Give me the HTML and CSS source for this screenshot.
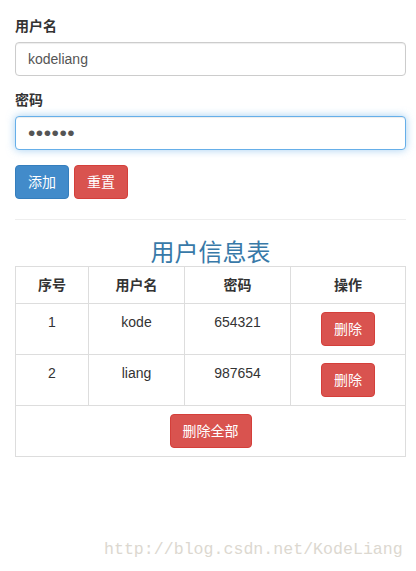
FILE: index.html
```html
<!doctype html>
<html lang="zh-CN">
<head>
  <meta charset="utf-8">
  <title>用户信息表</title>
  <link rel="stylesheet" href="styles.css">
</head>
<body>

<div class="page">
  <form class="user-form">
    <div class="form-group">
      <label for="username">用户名</label>
      <input type="text" id="username" class="form-control" value="kodeliang">
    </div>
    <div class="form-group">
      <label for="password">密码</label>
      <input type="password" id="password" class="form-control pwd is-focus" value="654321">
    </div>
    <div class="actions">
      <button type="button" class="btn btn-primary">添加</button>
      <button type="button" class="btn btn-danger">重置</button>
    </div>
  </form>

  <hr class="divider">

  <h2 class="table-title">用户信息表</h2>
  <table class="user-table">
    <colgroup>
      <col class="c-no">
      <col class="c-name">
      <col class="c-pwd">
      <col class="c-op">
    </colgroup>
    <tr>
      <th>序号</th>
      <th>用户名</th>
      <th>密码</th>
      <th>操作</th>
    </tr>
    <tr>
      <td>1</td>
      <td>kode</td>
      <td>654321</td>
      <td><button type="button" class="btn btn-danger">删除</button></td>
    </tr>
    <tr>
      <td>2</td>
      <td>liang</td>
      <td>987654</td>
      <td><button type="button" class="btn btn-danger">删除</button></td>
    </tr>
    <tr>
      <td colspan="4"><button type="button" class="btn btn-danger">删除全部</button></td>
    </tr>
  </table>
</div>

<div class="watermark">http://blog.csdn.net/KodeLiang</div>

</body>
</html>
```

FILE: styles.css
```css
* { box-sizing: border-box; }

body {
  margin: 0;
  font: normal 14px/1.42857 "Liberation Sans", Arial, "Noto Sans CJK SC", sans-serif;
  color: #333;
  background: #fff;
}

.page { padding: 17px 10px 0 15px; }

.form-group { margin-bottom: 15px; }
.form-group label {
  display: inline-block;
  margin-bottom: 5px;
  font-weight: bold;
}

.form-control {
  display: block;
  width: 100%;
  height: 34px;
  padding: 6px 12px;
  font: inherit;
  color: #555;
  background: #fff;
  border: 1px solid #ccc;
  border-radius: 4px;
  box-shadow: inset 0 1px 1px rgba(0,0,0,.075);
  outline: none;
}
.form-control.pwd {
  font-size: 21px;
  line-height: 20px;
  letter-spacing: 0.5px;
}
.form-control.is-focus {
  border-color: #66afe9;
  box-shadow: inset 0 1px 1px rgba(0,0,0,.075), 0 0 8px rgba(102,175,233,.6);
}

.actions { display: flex; gap: 5px; }

.btn {
  display: inline-block;
  padding: 6px 12px;
  font: inherit;
  line-height: 20px;
  color: #fff;
  border: 1px solid transparent;
  border-radius: 4px;
  cursor: pointer;
}
.btn-primary { background: #428bca; border-color: #357ebd; }
.btn-danger { background: #d9534f; border-color: #d43f3a; }

.divider {
  margin: 20px 0;
  border: 0;
  border-top: 1px solid #eee;
}

.table-title {
  margin: 0;
  font-size: 24px;
  font-weight: normal;
  line-height: 1.1;
  text-align: center;
  color: #3879a8;
}

.user-table {
  width: 100%;
  table-layout: fixed;
  border-collapse: collapse;
  border: 1px solid #ddd;
}
.c-no { width: 73px; }
.c-name { width: 96px; }
.c-pwd { width: 106px; }
.user-table th,
.user-table td {
  padding: 8px;
  border: 1px solid #ddd;
  text-align: center;
  vertical-align: top;
  line-height: 20px;
}

.watermark {
  position: absolute;
  left: 104px;
  top: 540px;
  font: normal 16.6px "Liberation Mono", "DejaVu Sans Mono", monospace;
  color: #dcd8d0;
  white-space: nowrap;
}
```
